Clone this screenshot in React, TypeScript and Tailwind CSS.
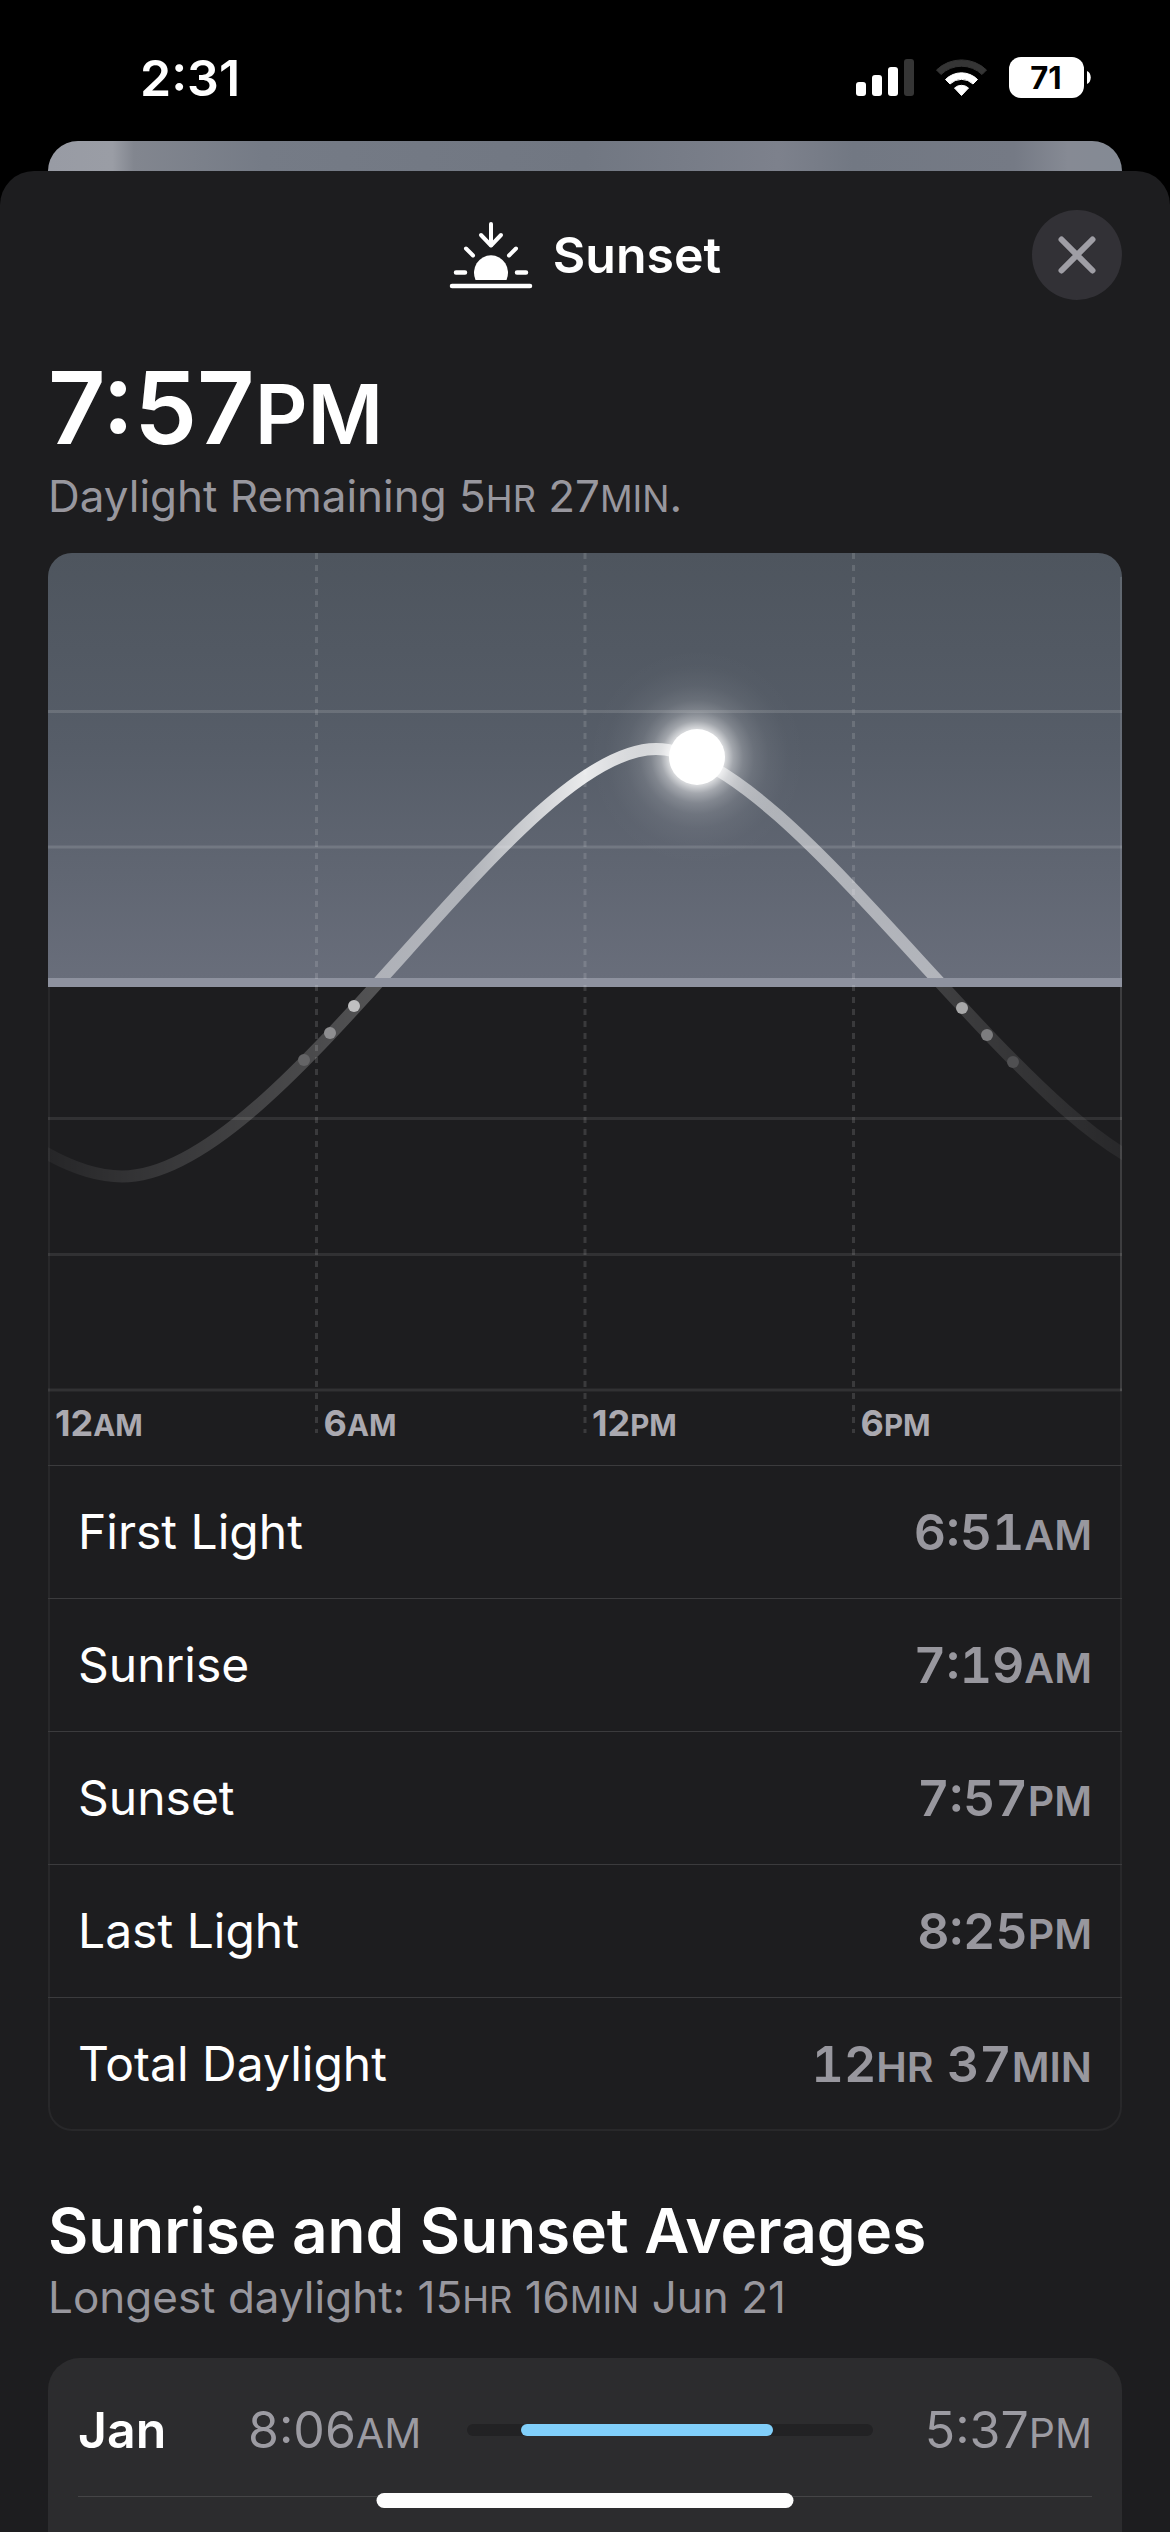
import { ReactNode } from "react";

interface ITimeRow {
  label: string;
  value: ReactNode;
}

interface IMonthRow {
  month: string;
  sunrise: ReactNode;
  sunset: ReactNode;
  start: number;
  end: number;
}

// unit suffix (AM, PM, HR, MIN) drawn as small capitals
const Unit = ({ children }: { children: ReactNode }) => (
  <span className="text-[0.82em] leading-none">{children}</span>
);

const timeRows: ITimeRow[] = [
  { label: "First Light", value: <>6:51<Unit>AM</Unit></> },
  { label: "Sunrise", value: <>7:19<Unit>AM</Unit></> },
  { label: "Sunset", value: <>7:57<Unit>PM</Unit></> },
  { label: "Last Light", value: <>8:25<Unit>PM</Unit></> },
  { label: "Total Daylight", value: <>12<Unit>HR</Unit> 37<Unit>MIN</Unit></> },
];

const monthRows: IMonthRow[] = [
  {
    month: "Jan",
    sunrise: <>8:06<Unit>AM</Unit></>,
    sunset: <>5:37<Unit>PM</Unit></>,
    start: 13.3,
    end: 75.4,
  },
];

const axisLabels = [
  { hour: "12", unit: "AM" },
  { hour: "6", unit: "AM" },
  { hour: "12", unit: "PM" },
  { hour: "6", unit: "PM" },
];

const CURVE =
  "M-4 599 C24 615 50 623.5 74 623.5 C234 623.5 467 196 608 196 C748 196 999 623.5 1140 623.5";

const twilightDots = [
  { x: 306, y: 453, fill: "#c0c0c1" },
  { x: 282, y: 480, fill: "#8e8e90" },
  { x: 256, y: 507, fill: "#646466" },
  { x: 914, y: 455, fill: "#a8a8a9" },
  { x: 939, y: 482, fill: "#7d7d7f" },
  { x: 965, y: 509, fill: "#505052" },
];

const StatusIcons = () => (
  <svg width="236" height="42" viewBox="0 0 236 42" role="img" aria-label="Signal, Wi-Fi and battery">
    <rect x="1" y="25" width="10" height="14" rx="3" fill="#fff" />
    <rect x="17" y="18" width="10" height="21" rx="3" fill="#fff" />
    <rect x="33" y="10" width="10" height="29" rx="3" fill="#fff" />
    <rect x="49" y="2" width="10" height="37" rx="3" fill="#353535" />
    <path
      d="M81.500 13 A36 36 0 0 1 131.500 13 L127 17.500 A29.500 29.500 0 0 0 86 17.500 Z"
      fill="#353535"
      stroke="#353535"
      strokeLinejoin="round"
    />
    <path
      d="M90.500 22.500 A22.500 22.500 0 0 1 122.500 22.500 L118 27 A16.500 16.500 0 0 0 95 27 Z"
      fill="#fff"
      stroke="#fff"
      strokeLinejoin="round"
    />
    <path
      d="M99.500 31 A10.500 10.500 0 0 1 113.500 31 L106.500 38.500 Z"
      fill="#fff"
      stroke="#fff"
      strokeLinejoin="round"
    />
    <rect x="154" y="0" width="75" height="41" rx="12" fill="#fff" />
    <path d="M232 14 C237 16 237 25 232 27 Z" fill="#fff" />
    <text
      x="191"
      y="32"
      textAnchor="middle"
      className="font-[Inter,sans-serif] text-[31px] font-bold"
      fill="#000"
    >
      71
    </text>
  </svg>
);

const SunsetIcon = () => (
  <svg width="84" height="68" viewBox="0 0 84 68" fill="none" stroke="#fff" strokeWidth="4" strokeLinecap="round" aria-hidden="true">
    <path d="M42 3 V24" />
    <path d="M32 14 L42 24.500 L52 14" strokeLinejoin="round" />
    <path d="M17 27.500 L24 34.500 M67 27.500 L60 34.500" />
    <path d="M7 51.500 H16 M68 51.500 H77" strokeWidth="4.500" />
    <path d="M3 65 H81" strokeWidth="4.500" />
    <path d="M26.500 59 A17 17.500 0 1 1 57.500 59 Z" fill="#fff" stroke="none" />
  </svg>
);

const SunChart = () => (
  <svg viewBox="0 0 1074 839" className="block h-auto w-full overflow-visible" role="img" aria-label="Sun position through the day">
    <defs>
      <linearGradient id="sky" x1="0" y1="0" x2="0" y2="1">
        <stop offset="0" stopColor="#4e555e" />
        <stop offset="0.45" stopColor="#565d68" />
        <stop offset="1" stopColor="#696e7b" />
      </linearGradient>
      <linearGradient id="dayCurve" gradientUnits="userSpaceOnUse" x1="0" y1="0" x2="1074" y2="0">
        <stop offset="0.31" stopColor="#fff" stopOpacity="0.47" />
        <stop offset="0.39" stopColor="#fff" stopOpacity="0.5" />
        <stop offset="0.50" stopColor="#fff" stopOpacity="0.87" />
        <stop offset="0.56" stopColor="#fff" stopOpacity="0.7" />
        <stop offset="0.65" stopColor="#fff" stopOpacity="0.52" />
        <stop offset="0.83" stopColor="#fff" stopOpacity="0.49" />
      </linearGradient>
      <linearGradient id="nightCurve" gradientUnits="userSpaceOnUse" x1="0" y1="0" x2="1074" y2="0">
        <stop offset="0" stopColor="#fff" stopOpacity="0.04" />
        <stop offset="0.08" stopColor="#fff" stopOpacity="0.1" />
        <stop offset="0.31" stopColor="#fff" stopOpacity="0.24" />
        <stop offset="0.83" stopColor="#fff" stopOpacity="0.15" />
        <stop offset="1" stopColor="#fff" stopOpacity="0.05" />
      </linearGradient>
      <radialGradient id="glow">
        <stop offset="0.26" stopColor="#fff" stopOpacity="0.75" />
        <stop offset="0.33" stopColor="#fff" stopOpacity="0.45" />
        <stop offset="0.42" stopColor="#fff" stopOpacity="0.24" />
        <stop offset="0.52" stopColor="#fff" stopOpacity="0.12" />
        <stop offset="0.65" stopColor="#fff" stopOpacity="0.05" />
        <stop offset="0.82" stopColor="#fff" stopOpacity="0.01" />
        <stop offset="1" stopColor="#fff" stopOpacity="0" />
      </radialGradient>
      <clipPath id="above">
        <rect width="1074" height="427" />
      </clipPath>
      <clipPath id="below">
        <rect y="433" width="1074" height="406" />
      </clipPath>
    </defs>

    <path d="M0 430 V24 A24 24 0 0 1 24 0 H1050 A24 24 0 0 1 1074 24 V430 Z" fill="url(#sky)" />
    <path d={CURVE} fill="none" stroke="url(#dayCurve)" strokeWidth="12" clipPath="url(#above)" />
    <path d={CURVE} fill="none" stroke="url(#nightCurve)" strokeWidth="12" clipPath="url(#below)" />
    {twilightDots.map((dot) => (
      <circle key={dot.x} cx={dot.x} cy={dot.y} r="6" fill={dot.fill} />
    ))}

    <g fill="#fff">
      <rect y="157" width="1074" height="3" fillOpacity="0.13" />
      <rect y="292.500" width="1074" height="3" fillOpacity="0.13" />
      <rect y="564" width="1074" height="3" fillOpacity="0.09" />
      <rect y="700" width="1074" height="3" fillOpacity="0.09" />
      <rect y="835.500" width="1074" height="3" fillOpacity="0.09" />
      <rect x="1072" y="24" width="2" height="814" fillOpacity="0.1" />
    </g>
    <rect y="425" width="1074" height="9" fill="#8e929f" />
    <g stroke="#fff" strokeWidth="3" strokeDasharray="6 6" strokeOpacity="0.13">
      <path d="M268.500 0 V880" />
      <path d="M537 0 V880" />
      <path d="M805.500 0 V880" />
    </g>

    <circle cx="649" cy="204" r="110" fill="url(#glow)" />
    <circle cx="649" cy="204" r="28" fill="#fff" />
  </svg>
);

const App = () => {
  return (
    <main className="flex min-h-screen flex-col bg-black font-[Inter,sans-serif] text-white">
      <div className="flex h-[141px] items-center justify-between pt-[14px] pr-[79px] pl-[140px]">
        <time className="text-[50px] leading-[60px] font-semibold">2:31</time>
        <StatusIcons />
      </div>
      <div className="mx-12 h-[30px] rounded-t-[30px] bg-[linear-gradient(to_right,#989ba4_0%,#9a9da5_6%,#82868f_8%,#757b86_20%,#717782_50%,#7d818c_68%,#727883_75%,#757a85_90%,#868a94_95%,#848a94_100%)]" />

      <section className="flex flex-1 flex-col rounded-t-[34px] bg-[#1d1d1f] px-12 pt-[39px]">
        <header className="grid grid-cols-[90px_1fr_90px] items-center">
          <div className="col-start-2 flex items-center justify-center gap-5">
            <SunsetIcon />
            <h1 className="text-[50px] leading-[60px] font-semibold">Sunset</h1>
          </div>
          <button
            type="button"
            aria-label="Close"
            className="flex size-[90px] items-center justify-center rounded-full bg-[#323136]"
          >
            <svg width="40" height="40" viewBox="0 0 40 40" stroke="#9f9ea5" strokeWidth="6" strokeLinecap="round" aria-hidden="true">
              <path d="M4.500 4.500 L35.500 35.500 M35.500 4.500 L4.500 35.500" />
            </svg>
          </button>
        </header>

        <p className="mt-[58px] text-[100px] leading-[100px] font-semibold">
          7:57<Unit>PM</Unit>
        </p>
        <p className="mt-3 text-[44px] leading-[52px] text-[#98979e]">
          Daylight Remaining 5<Unit>HR</Unit> 27<Unit>MIN</Unit>.
        </p>

        <div className="mt-[31px] rounded-3xl shadow-[inset_0_0_0_2px_#28282a]">
          <SunChart />
          <div className="grid h-[73px] grid-cols-4 pt-[9px] text-[36px] leading-[44px] font-bold text-[#aaa9b0]">
            {axisLabels.map((item) => (
              <span key={item.hour + item.unit} className="pl-[7px]">
                {item.hour}
                <Unit>{item.unit}</Unit>
              </span>
            ))}
          </div>
          <table className="w-full border-collapse text-[50px] leading-[60px]">
            <tbody>
              {timeRows.map((row) => (
                <tr key={row.label} className="h-[133px] border-t border-[#3b3b3d]">
                  <th scope="row" className="pl-[30px] text-left text-[48px] font-normal">
                    {row.label}
                  </th>
                  <td className="pr-[30px] text-right font-semibold text-[#98979e] tabular-nums">
                    {row.value}
                  </td>
                </tr>
              ))}
            </tbody>
          </table>
        </div>

        <h2 className="mt-[62px] text-[62px] leading-[76px] font-semibold">
          Sunrise and Sunset Averages
        </h2>
        <p className="mt-0.5 text-[44px] leading-[52px] text-[#98979e]">
          Longest daylight: 15<Unit>HR</Unit> 16<Unit>MIN</Unit> Jun 21
        </p>

        <ul className="mt-[35px] flex-1 rounded-t-[32px] bg-[#2c2c2e] px-[30px] pt-1.5">
          {monthRows.map((row) => (
            <li
              key={row.month}
              className="grid h-[133px] grid-cols-[170px_172px_1fr_172px] items-center border-b border-[#454547] text-[50px] leading-[60px]"
            >
              <span className="font-semibold">{row.month}</span>
              <span className="text-right whitespace-nowrap text-[#9c9ba2]">{row.sunrise}</span>
              <div className="mx-[47px] h-3 rounded-full bg-[#222224]">
                <div
                  className="h-full rounded-full bg-[#81cffa]"
                  style={{
                    marginLeft: `${row.start}%`,
                    width: `${row.end - row.start}%`,
                  }}
                />
              </div>
              <span className="text-right whitespace-nowrap text-[#9c9ba2]">{row.sunset}</span>
            </li>
          ))}
        </ul>
      </section>

      <div className="fixed bottom-6 left-1/2 h-[15px] w-[417px] -translate-x-1/2 rounded-full bg-[#fdfdfd]" />
    </main>
  );
};

export default App;
